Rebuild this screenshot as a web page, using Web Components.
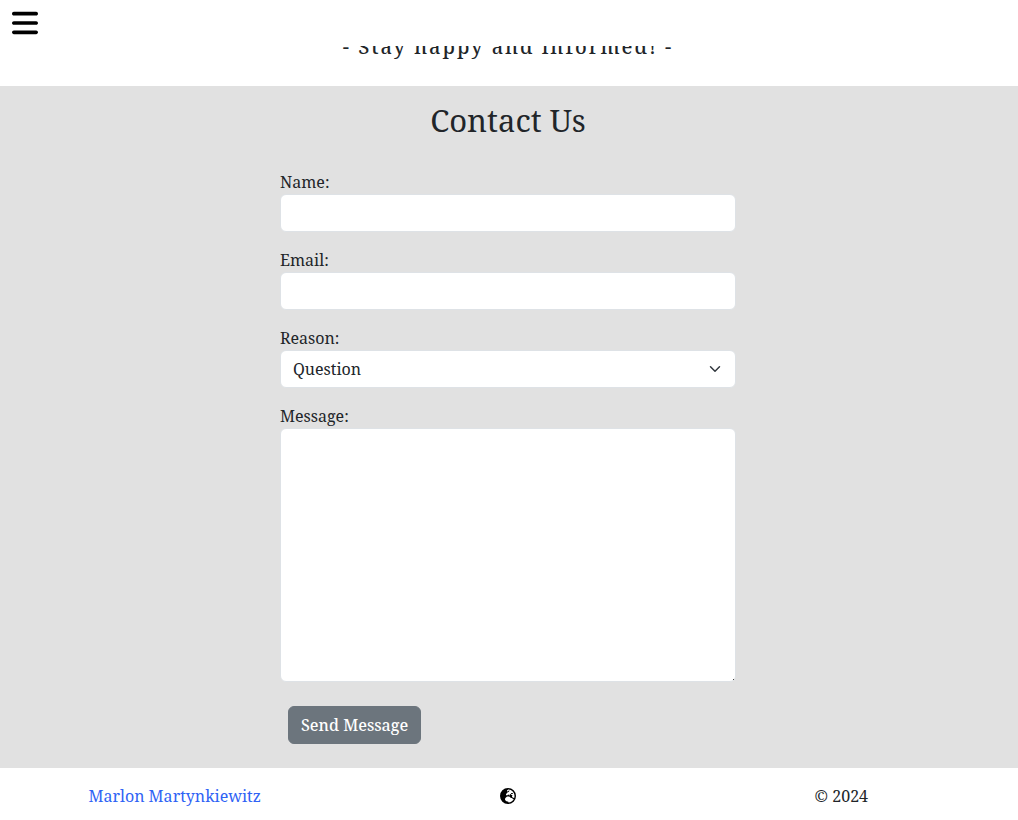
<!DOCTYPE html>
<html lang="en">
<head>
<meta charset="utf-8">
<meta name="viewport" content="width=device-width, initial-scale=1">
<title>Contact Us</title>
<style>
  body { margin: 0; background: #fff; color: #212529; font: 16px/24px "Noto Serif", "Liberation Serif", serif; }
</style>
</head>
<body>
<contact-page></contact-page>

<script>
class TopBar extends HTMLElement {
  constructor() {
    super();
    this.attachShadow({ mode: "open" }).innerHTML = `
      <style>
        :host { display: block; position: fixed; inset: 0 0 auto 0; height: 46px; background: #fff; z-index: 10; }
        button { display: block; margin: 0; padding: 8px 12px; border: 0; background: none; color: #000; cursor: pointer; }
        svg { display: block; height: 30px; width: 26px; fill: currentColor; }
      </style>
      <button type="button" aria-label="Open menu">
        <svg viewBox="0 0 448 512" aria-hidden="true"><path d="M0 96C0 78.300 14.300 64 32 64H416c17.700 0 32 14.300 32 32s-14.300 32-32 32H32C14.300 128 0 113.700 0 96zM0 256c0-17.700 14.300-32 32-32H416c17.700 0 32 14.300 32 32s-14.300 32-32 32H32c-17.700 0-32-14.300-32-32zM448 416c0 17.700-14.300 32-32 32H32c-17.700 0-32-14.300-32-32s14.300-32 32-32H416c17.700 0 32 14.300 32 32z"/></svg>
      </button>`;
  }
}

class TagLine extends HTMLElement {
  constructor() {
    super();
    this.attachShadow({ mode: "open" }).innerHTML = `
      <style>
        :host { display: block; padding: 32px 10px 24px 8px; text-align: center; }
        p { margin: 0; font-size: 20px; font-weight: 500; line-height: 30px; letter-spacing: 2px; }
      </style>
      <p><slot></slot></p>`;
  }
}

class FormField extends HTMLElement {
  constructor() {
    super();
    this.attachShadow({ mode: "open" });
  }
  connectedCallback() {
    const kind = this.getAttribute("kind");
    const label = this.getAttribute("label");
    const controls = {
      text: `<input id="control" type="text">`,
      email: `<input id="control" type="email">`,
      select: `<select id="control"><option>Question</option></select>`,
      textarea: `<textarea id="control" rows="10"></textarea>`
    };
    this.shadowRoot.innerHTML = `
      <style>
        :host { display: block; }
        label { display: block; }
        input, select, textarea {
          display: block; box-sizing: border-box; width: 100%; margin: 0; padding: 6px 12px;
          border: 1px solid #dee2e6; border-radius: 6px; background: #fff; color: inherit; font: inherit;
          appearance: none;
        }
        input, select { height: 38px; }
        select {
          padding-right: 36px;
          background: #fff url("data:image/svg+xml,%3csvg xmlns='http://www.w3.org/2000/svg' viewBox='0 0 16 16'%3e%3cpath fill='none' stroke='%23343a40' stroke-linecap='round' stroke-linejoin='round' stroke-width='2' d='m2 5 6 6 6-6'/%3e%3c/svg%3e") no-repeat right 12px center / 16px 12px;
        }
        textarea { resize: vertical; }
        textarea::-webkit-resizer { background: linear-gradient(#444, #444) no-repeat right 1px bottom 1px / 1px 1px; }
      </style>
      <label for="control">${label}</label>
      ${controls[kind]}`;
  }
}

class ContactForm extends HTMLElement {
  constructor() {
    super();
    this.attachShadow({ mode: "open" }).innerHTML = `
      <style>
        :host { display: block; padding: 16px 10px 24px 8px; background: #e1e1e1; }
        h2 { margin: 0 0 32px; text-align: center; font-weight: 400; font-size: 31px; line-height: 36px; }
        form { display: grid; gap: 16px; max-width: 456px; margin: 0 auto; }
        button {
          justify-self: start; margin: 8px 8px 0; padding: 6px 12px; border: 1px solid #6c757d; border-radius: 6px;
          background: #6c757d; color: #fff; font: inherit; font-weight: 500; cursor: pointer;
        }
      </style>
      <h2>Contact Us</h2>
      <form>
        <form-field kind="text" label="Name:"></form-field>
        <form-field kind="email" label="Email:"></form-field>
        <form-field kind="select" label="Reason:"></form-field>
        <form-field kind="textarea" label="Message:"></form-field>
        <button type="button">Send Message</button>
      </form>`;
  }
}

class PageFooter extends HTMLElement {
  constructor() {
    super();
    this.attachShadow({ mode: "open" }).innerHTML = `
      <style>
        :host { display: block; padding: 16px 10px 12px 8px; }
        footer { display: grid; grid-template-columns: repeat(3, 1fr); justify-items: center; align-items: center; }
        a { color: #2f63f5; text-decoration: none; }
        .globe { color: #000; }
        svg { display: block; width: 16px; height: 16px; fill: currentColor; }
      </style>
      <footer>
        <a href="#author">Marlon Martynkiewitz</a>
        <a class="globe" href="#language" aria-label="Website">
          <svg viewBox="0 0 512 512" aria-hidden="true"><path fill-rule="evenodd" d="M266.300 48.300L232.500 73.600c-5.400 4-8.500 10.400-8.500 17.100v9.100c0 6.800 5.500 12.300 12.300 12.300c2.400 0 4.800-.7 6.800-2.100l41.800-27.900c2-1.300 4.400-2.100 6.800-2.100h1c6.200 0 11.300 5.100 11.300 11.300c0 3-1.200 5.900-3.300 8l-19.900 19.900c-5.800 5.800-12.900 10.200-20.700 12.800l-26.500 8.800c-5.800 1.900-9.600 7.300-9.600 13.400c0 3.700-1.500 7.300-4.100 10l-17.900 17.900c-6.400 6.400-9.900 15-9.900 24v4.300c0 16.400 13.600 29.700 29.900 29.700c11 0 21.200-6.200 26.100-16l4-8.100c2.400-4.800 7.400-7.900 12.800-7.900c4.500 0 8.700 2.100 11.400 5.700l16.300 21.700c2.100 2.900 5.500 4.500 9.100 4.500c8.400 0 13.900-8.900 10.100-16.400l-1.100-2.300c-3.500-7 0-15.500 7.500-18l21.200-7.100c7.600-2.500 12.700-9.600 12.700-17.600c0-10.300 8.300-18.600 18.600-18.600H400c8.800 0 16 7.200 16 16s-7.200 16-16 16H379.300c-7.200 0-14.200 2.900-19.300 8l-4.700 4.700c-2.100 2.100-3.300 5-3.300 8c0 6.200 5.100 11.300 11.300 11.300h11.300c6 0 11.800 2.400 16 6.600l6.500 6.500c1.800 1.800 2.800 4.300 2.800 6.800s-1 5-2.800 6.800l-7.500 7.500C386 262 384 266.900 384 272s2 10 5.700 13.700L408 304c10.200 10.200 24.100 16 38.600 16H454c6.500-20.200 10-41.700 10-64c0-111.400-87.600-202.400-197.700-207.700zm172 307.900c-3.700-2.600-8.200-4.100-13-4.100c-6 0-11.800-2.400-16-6.600L396 332c-7.700-7.700-18-12-28.900-12c-9.700 0-19.200-3.500-26.600-9.800L314 287.400c-11.600-9.900-26.400-15.400-41.700-15.400H251.400c-12.600 0-25 3.700-35.500 10.700L188.500 301c-17.800 11.900-28.500 31.900-28.500 53.300v3.200c0 17 6.700 33.300 18.700 45.300l16 16c8.500 8.500 20 13.300 32 13.300H248c13.300 0 24 10.700 24 24c0 2.500 .4 5 1.100 7.300c71.300-5.800 132.500-47.600 165.200-107.200zM0 256a256 256 0 1 1 512 0A256 256 0 1 1 0 256z"/></svg>
        </a>
        <span>© 2024</span>
      </footer>`;
  }
}

class ContactPage extends HTMLElement {
  constructor() {
    super();
    this.attachShadow({ mode: "open" }).innerHTML = `
      <style>:host, main { display: block; }</style>
      <top-bar></top-bar>
      <main>
        <tag-line>- Stay happy and informed! -</tag-line>
        <contact-form></contact-form>
      </main>
      <page-footer></page-footer>`;
  }
}

customElements.define("top-bar", TopBar);
customElements.define("tag-line", TagLine);
customElements.define("form-field", FormField);
customElements.define("contact-form", ContactForm);
customElements.define("page-footer", PageFooter);
customElements.define("contact-page", ContactPage);
</script>
</body>
</html>
